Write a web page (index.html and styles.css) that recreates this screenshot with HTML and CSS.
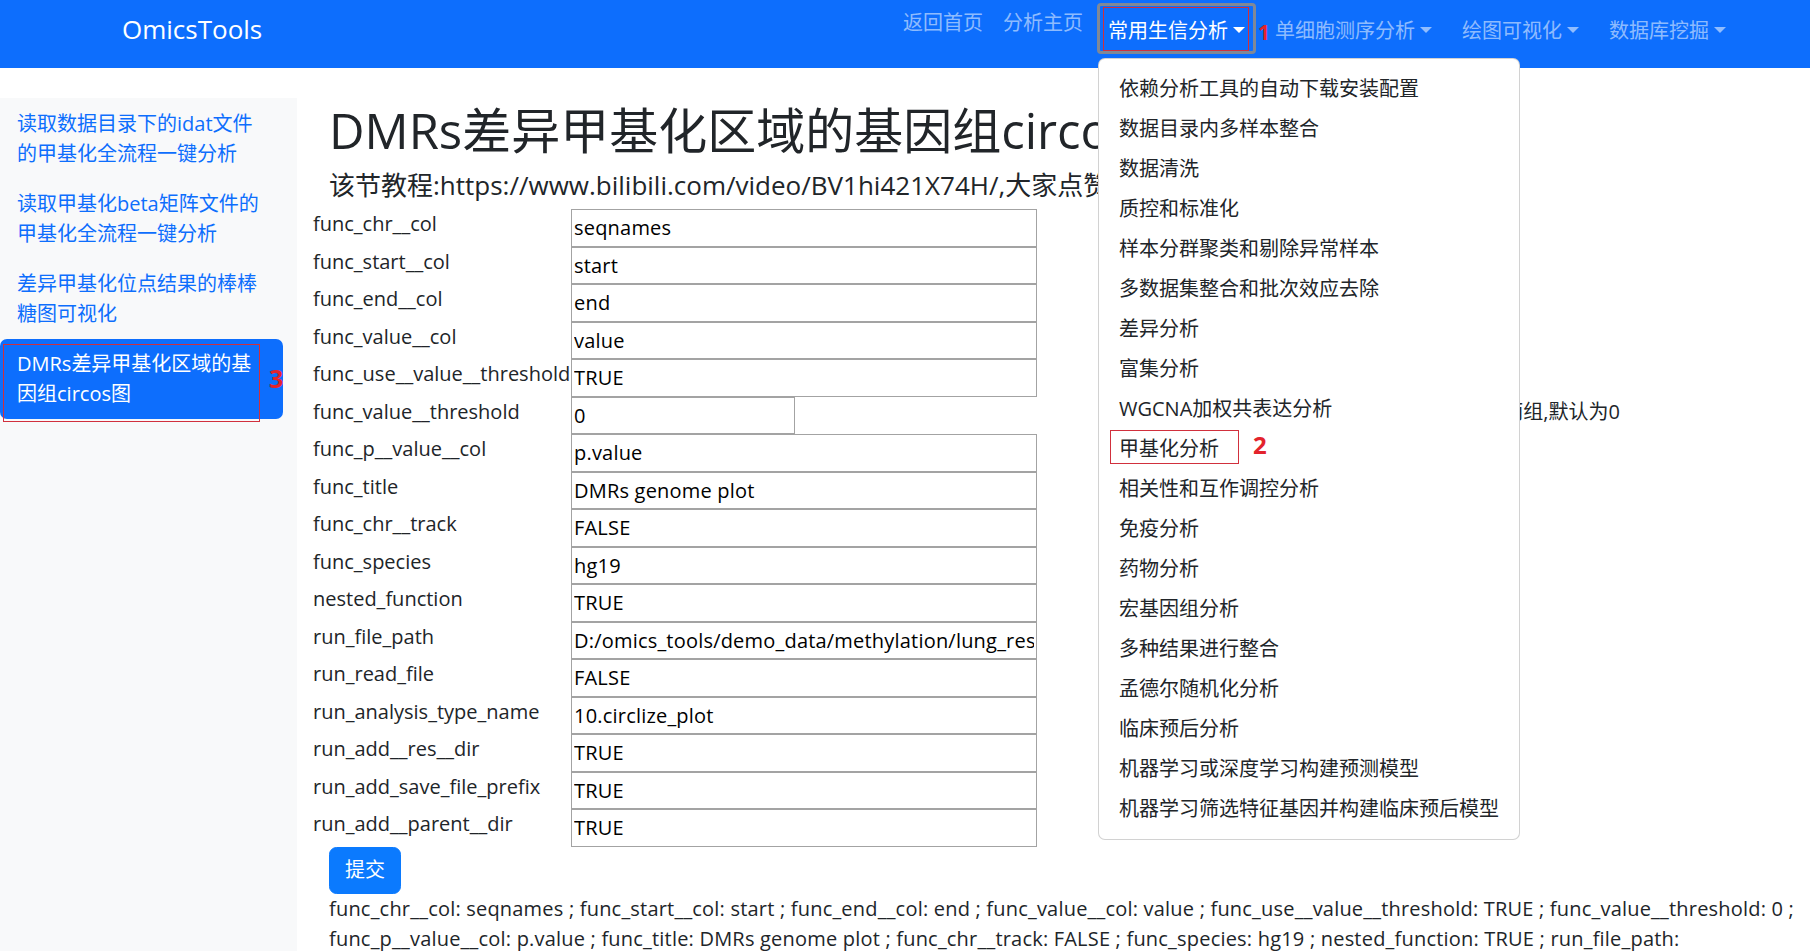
FILE: index.html
```html
<!DOCTYPE html>
<html lang="zh-CN">
<head>
<meta charset="utf-8">
<title>OmicsTools</title>
<link rel="stylesheet" href="styles.css">
</head>
<body>
<nav class="navbar">
  <a class="brand" href="#">OmicsTools</a>
  <ul class="nav">
    <li class="nav-item"><a class="nav-link" href="#">返回首页</a></li>
    <li class="nav-item"><a class="nav-link" href="#">分析主页</a></li>
    <li class="nav-item open">
      <a class="nav-link toggle active" href="#">常用生信分析</a>
      <span class="focus-ring"></span>
      <span class="anno-box anno-box-1"></span>
      <span class="anno-num anno-num-1">1</span>
      <div class="dropdown-menu">
        <a class="dropdown-item" href="#">依赖分析工具的自动下载安装配置</a>
        <a class="dropdown-item" href="#">数据目录内多样本整合</a>
        <a class="dropdown-item" href="#">数据清洗</a>
        <a class="dropdown-item" href="#">质控和标准化</a>
        <a class="dropdown-item" href="#">样本分群聚类和剔除异常样本</a>
        <a class="dropdown-item" href="#">多数据集整合和批次效应去除</a>
        <a class="dropdown-item" href="#">差异分析</a>
        <a class="dropdown-item" href="#">富集分析</a>
        <a class="dropdown-item" href="#">WGCNA加权共表达分析</a>
        <a class="dropdown-item marked" href="#">甲基化分析<span class="anno-box anno-box-2"></span><span class="anno-num anno-num-2">2</span></a>
        <a class="dropdown-item" href="#">相关性和互作调控分析</a>
        <a class="dropdown-item" href="#">免疫分析</a>
        <a class="dropdown-item" href="#">药物分析</a>
        <a class="dropdown-item" href="#">宏基因组分析</a>
        <a class="dropdown-item" href="#">多种结果进行整合</a>
        <a class="dropdown-item" href="#">孟德尔随机化分析</a>
        <a class="dropdown-item" href="#">临床预后分析</a>
        <a class="dropdown-item" href="#">机器学习或深度学习构建预测模型</a>
        <a class="dropdown-item" href="#">机器学习筛选特征基因并构建临床预后模型</a>
      </div>
    </li>
    <li class="nav-item"><a class="nav-link toggle" href="#">单细胞测序分析</a></li>
    <li class="nav-item"><a class="nav-link toggle" href="#">绘图可视化</a></li>
    <li class="nav-item"><a class="nav-link toggle" href="#">数据库挖掘</a></li>
  </ul>
</nav>

<div class="page">
  <aside class="sidebar">
    <ul class="side-nav">
      <li><a class="side-link" href="#">读取数据目录下的idat文件的甲基化全流程一键分析</a></li>
      <li><a class="side-link" href="#">读取甲基化beta矩阵文件的甲基化全流程一键分析</a></li>
      <li><a class="side-link" href="#">差异甲基化位点结果的棒棒糖图可视化</a></li>
      <li class="side-active"><a class="side-link active" href="#">DMRs差异甲基化区域的基因组circos图</a><span class="anno-box anno-box-3"></span><span class="anno-num anno-num-3">3</span></li>
    </ul>
  </aside>

  <main class="main">
    <h1 class="title">DMRs差异甲基化区域的基因组circos图</h1>
    <h5 class="subtitle">该节教程:https://www.bilibili.com/video/BV1hi421X74H/,大家点赞收藏转发</h5>

    <form class="form">
      <div class="row"><label>func_chr__col</label><input type="text" value="seqnames"></div>
      <div class="row"><label>func_start__col</label><input type="text" value="start"></div>
      <div class="row"><label>func_end__col</label><input type="text" value="end"></div>
      <div class="row"><label>func_value__col</label><input type="text" value="value"></div>
      <div class="row"><label>func_use__value__threshold</label><input type="text" value="TRUE"></div>
      <div class="row"><label>func_value__threshold</label><input class="short" type="text" value="0"><span class="desc">根据该数值阈值将差异甲基化区域分为高低两组,默认为0</span></div>
      <div class="row"><label>func_p__value__col</label><input type="text" value="p.value"></div>
      <div class="row"><label>func_title</label><input type="text" value="DMRs genome plot"></div>
      <div class="row"><label>func_chr__track</label><input type="text" value="FALSE"></div>
      <div class="row"><label>func_species</label><input type="text" value="hg19"></div>
      <div class="row"><label>nested_function</label><input type="text" value="TRUE"></div>
      <div class="row"><label>run_file_path</label><input type="text" value="D:/omics_tools/demo_data/methylation/lung_res/DMRs_result.csv"></div>
      <div class="row"><label>run_read_file</label><input type="text" value="FALSE"></div>
      <div class="row"><label>run_analysis_type_name</label><input type="text" value="10.circlize_plot"></div>
      <div class="row"><label>run_add__res__dir</label><input type="text" value="TRUE"></div>
      <div class="row"><label>run_add_save_file_prefix</label><input type="text" value="TRUE"></div>
      <div class="row"><label>run_add__parent__dir</label><input type="text" value="TRUE"></div>
    </form>

    <button class="btn" type="button">提交</button>

    <p class="result">func_chr__col: seqnames ; func_start__col: start ; func_end__col: end ; func_value__col: value ; func_use__value__threshold: TRUE ; func_value__threshold: 0 ; func_p__value__col: p.value ; func_title: DMRs genome plot ; func_chr__track: FALSE ; func_species: hg19 ; nested_function: TRUE ; run_file_path: <span class="nowrap">D:/omics_tools/demo_data/methylation/lung_res/DMRs_result.csv</span> ; run_read_file: FALSE ; run_analysis_type_name: 10.circlize_plot ; run_add__res__dir: TRUE ; run_add_save_file_prefix: TRUE ; run_add__parent__dir: TRUE</p>
  </main>
</div>
</body>
</html>
```

FILE: styles.css
```css
html, body {
  margin: 0;
  padding: 0;
}

body {
  font-family: "Open Sans", "Noto Sans CJK SC", sans-serif;
  font-size: 20px;
  line-height: 30px;
  color: #212529;
  background: #ffffff;
}

a {
  text-decoration: none;
}

/* ---------- navbar ---------- */
.navbar {
  display: flex;
  align-items: flex-start;
  height: 68px;
  background: #0d6efd;
}

.brand {
  margin: 11px 0 0 122px;
  font-size: 26px;
  line-height: 37px;
  color: #ffffff;
}

.nav {
  display: flex;
  list-style: none;
  margin: 0 64px 0 auto;
  padding: 0;
}

.nav-item {
  position: relative;
}

.nav-item.open {
  margin-left: 5px;
}

.nav-link {
  display: block;
  padding: 8px 10px;
  font-size: 20px;
  line-height: 30px;
  color: rgba(255, 255, 255, 0.55);
  white-space: nowrap;
}

.nav-link.toggle {
  padding: 16px 20px 8px 10px;
}

.nav-link.toggle::after {
  content: "";
  display: inline-block;
  margin-left: 5px;
  vertical-align: 5px;
  border-top: 6px solid;
  border-left: 6px solid transparent;
  border-right: 6px solid transparent;
}

.nav-link.active {
  color: #ffffff;
}

.focus-ring {
  position: absolute;
  left: -1px;
  top: 3px;
  width: 159px;
  height: 51px;
  box-sizing: border-box;
  border: 3px solid #7f8897;
  border-radius: 4px;
}

/* ---------- annotations ---------- */
.anno-box {
  position: absolute;
  box-sizing: border-box;
  border: 1px solid #d1303d;
}

.anno-num {
  position: absolute;
  font-family: "Open Sans", sans-serif;
  font-weight: 700;
  line-height: 1;
  color: #e3232c;
}

.anno-box-1 {
  left: 5px;
  top: 7px;
  width: 146px;
  height: 44px;
}

.anno-num-1 {
  left: 160px;
  top: 22px;
  font-size: 21px;
}

.anno-box-2 {
  left: 11px;
  top: 1px;
  width: 129px;
  height: 34px;
}

.anno-num-2 {
  left: 154px;
  top: 4px;
  font-size: 24px;
}

.anno-box-3 {
  left: 3px;
  top: 5px;
  width: 257px;
  height: 78px;
}

.anno-num-3 {
  left: 269px;
  top: 27px;
  font-size: 25px;
}

/* ---------- dropdown ---------- */
.dropdown-menu {
  position: absolute;
  left: 0;
  top: 58px;
  z-index: 10;
  width: 422px;
  box-sizing: border-box;
  padding: 10px 0;
  background: #ffffff;
  border: 1px solid rgba(0, 0, 0, 0.175);
  border-radius: 7px;
}

.dropdown-item {
  position: relative;
  display: block;
  padding: 5px 20px;
  font-size: 20px;
  line-height: 30px;
  color: #212529;
  white-space: nowrap;
}

/* ---------- page ---------- */
.page {
  display: flex;
  align-items: stretch;
}

.sidebar {
  flex: none;
  width: 297px;
  margin-top: 30px;
  padding: 1px 14px 0 0;
  box-sizing: border-box;
  background: #f8f9fa;
}

.side-nav {
  list-style: none;
  margin: 0;
  padding: 0;
}

.side-nav li {
  position: relative;
}

.side-link {
  display: block;
  padding: 10px 17px;
  font-size: 20px;
  line-height: 30px;
  color: #0d6efd;
  border-radius: 7px;
}

.side-link.active {
  color: #ffffff;
  background: #0d6efd;
}

.main {
  flex: 1;
  min-width: 0;
  padding: 33px 0 0 16px;
}

.title {
  margin: 0 0 11px 16px;
  font-size: 49px;
  line-height: 58px;
  font-weight: 400;
  white-space: nowrap;
}

.subtitle {
  margin: 0 0 9px 16px;
  font-size: 26px;
  line-height: 30px;
  font-weight: 400;
  white-space: nowrap;
}

/* ---------- form ---------- */
.form {
  margin: 0;
}

.row {
  display: flex;
  align-items: flex-start;
  height: 37.5px;
}

.row label {
  flex: none;
  width: 258px;
  line-height: 30px;
  white-space: nowrap;
}

.row input {
  flex: none;
  width: 466px;
  height: 37.5px;
  box-sizing: border-box;
  margin: 0;
  padding: 0 2px;
  font-family: inherit;
  font-size: 20px;
  letter-spacing: 0.2px;
  color: #000000;
  background: #ffffff;
  border: 1px solid #a3a3a3;
  border-radius: 0;
  outline: none;
}

.row input.short {
  width: 224px;
}

.desc {
  margin: 0 190px 0 auto;
  line-height: 30px;
  white-space: nowrap;
}

.btn {
  display: block;
  margin: 0 0 0 16px;
  padding: 7.5px 15px;
  font-family: inherit;
  font-size: 20px;
  line-height: 30px;
  color: #ffffff;
  background: #0b7afe;
  border: 1px solid #0b7afe;
  border-radius: 7.5px;
}

.result {
  margin: 0 0 0 16px;
  line-height: 30px;
  letter-spacing: 0.2px;
}

.nowrap {
  white-space: nowrap;
}
```
